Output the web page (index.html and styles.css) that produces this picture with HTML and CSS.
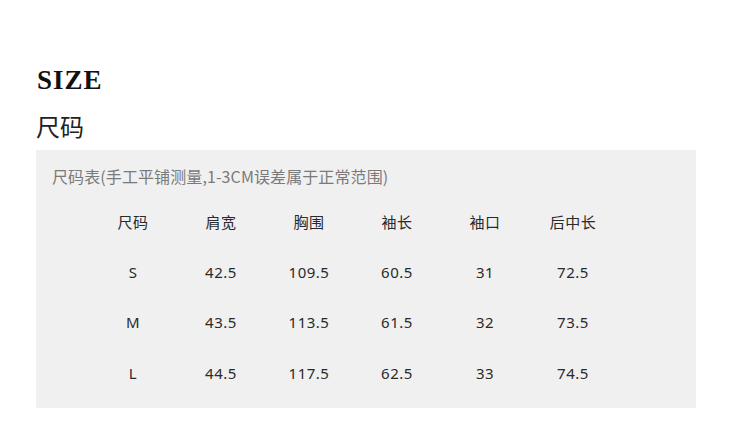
FILE: index.html
```html
<!DOCTYPE html>
<html lang="zh">
<head>
<meta charset="utf-8">
<title>SIZE 尺码</title>
<link rel="stylesheet" href="styles.css">
</head>
<body>
<div class="page">
  <h1 class="title-en">SIZE</h1>
  <h2 class="title-cn">尺码</h2>
  <section class="chart">
    <p class="note">尺码表(手工平铺测量,1-3CM误差属于正常范围)</p>
    <div class="grid">
      <div class="cell">尺码</div><div class="cell">肩宽</div><div class="cell">胸围</div><div class="cell">袖长</div><div class="cell">袖口</div><div class="cell">后中长</div>
      <div class="cell">S</div><div class="cell">42.5</div><div class="cell">109.5</div><div class="cell">60.5</div><div class="cell">31</div><div class="cell">72.5</div>
      <div class="cell">M</div><div class="cell">43.5</div><div class="cell">113.5</div><div class="cell">61.5</div><div class="cell">32</div><div class="cell">73.5</div>
      <div class="cell">L</div><div class="cell">44.5</div><div class="cell">117.5</div><div class="cell">62.5</div><div class="cell">33</div><div class="cell">74.5</div>
    </div>
  </section>
</div>
</body>
</html>
```
FILE: styles.css
```css
* { box-sizing: border-box; }
html, body { margin: 0; padding: 0; background: #fff; }
body {
  font-family: "Noto Sans", "Noto Sans CJK SC", sans-serif;
  color: #2a2a2a;
}
.page {
  padding: 64px 0 0 36px;
  width: 750px;
  height: 445px;
  overflow: hidden;
}
.title-en {
  margin: 0;
  font-family: "Liberation Serif", serif;
  font-weight: bold;
  font-size: 27px;
  line-height: 32px;
  letter-spacing: 1px;
  color: #111;
  padding-left: 1px;
}
.title-cn {
  margin: 16px 0 0 0;
  font-family: "Noto Sans CJK SC", sans-serif;
  font-weight: normal;
  font-size: 24px;
  line-height: 28px;
  color: #222;
}
.chart {
  margin-top: 10px;
  width: 660px;
  height: 258px;
  background: #f0f0f0;
  padding: 15px 0 0 16px;
}
.note {
  margin: 0;
  font-family: "Noto Sans CJK SC", sans-serif;
  font-size: 16px;
  line-height: 22px;
  letter-spacing: 0.1px;
  color: #7a7a7a;
}
.grid {
  margin: 9px 0 0 37px;
  display: grid;
  grid-template-columns: repeat(6, 88px);
  grid-auto-rows: 50.5px;
}
.cell {
  display: flex;
  align-items: center;
  justify-content: center;
  font-size: 15px;
  color: #2a2a2a;
  letter-spacing: 0.5px;
}
```
